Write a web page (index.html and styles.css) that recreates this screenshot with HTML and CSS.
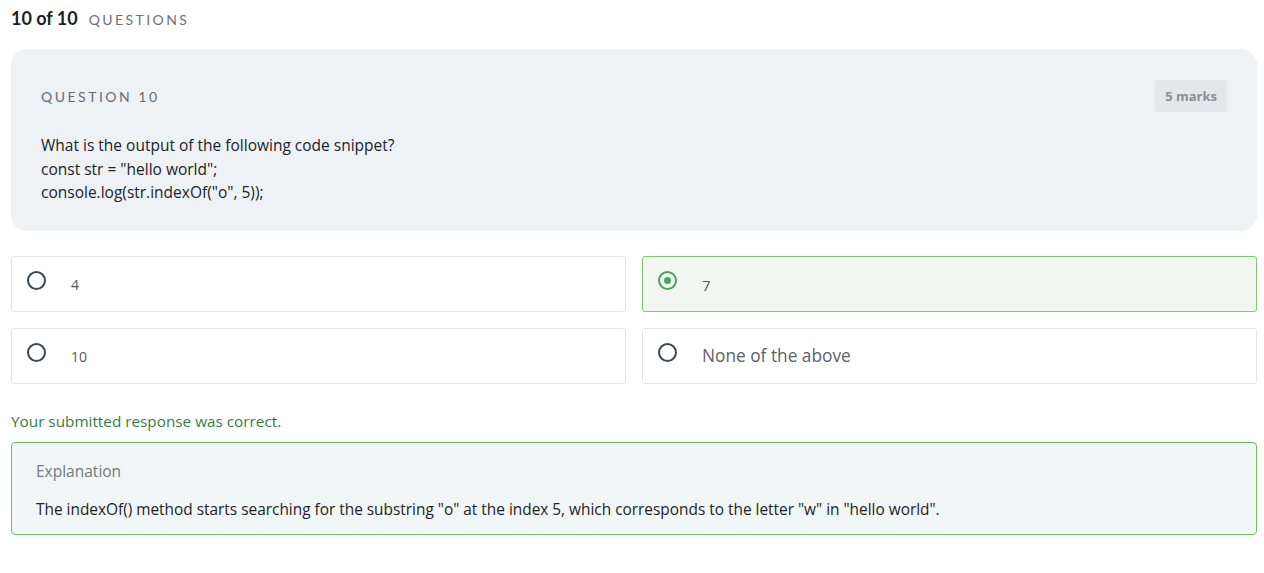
FILE: index.html
```html
<!DOCTYPE html>
<html>
<head>
<meta charset="utf-8">
<link rel="stylesheet" href="styles.css">
</head>
<body>
<div class="page">
  <div class="counter"><span class="count">10 of 10</span><span class="label">QUESTIONS</span></div>
  <div class="qcard">
    <div class="qhead">
      <span class="qnum">QUESTION 10</span>
      <span class="marks">5 marks</span>
    </div>
    <div class="qtext">What is the output of the following code snippet?<br>const str = "hello world";<br>console.log(str.indexOf("o", 5));</div>
  </div>
  <div class="options">
    <div class="opt"><span class="radio"></span><span class="otext small">4</span></div>
    <div class="opt selected"><span class="radio"></span><span class="otext">7</span></div>
    <div class="opt"><span class="radio"></span><span class="otext small">10</span></div>
    <div class="opt"><span class="radio"></span><span class="otext large">None of the above</span></div>
  </div>
  <div class="result">Your submitted response was correct.</div>
  <div class="explain">
    <div class="etitle">Explanation</div>
    <div class="etext">The indexOf() method starts searching for the substring "o" at the index 5, which corresponds to the letter "w" in "hello world".</div>
  </div>
</div>
</body>
</html>
```

FILE: styles.css
```css
* { box-sizing: border-box; }
body {
  margin: 0;
  background: #fff;
  font-family: "Open Sans", Lato, sans-serif;
  color: #1f2328;
}
.page {
  padding: 7px 7px 0 11px;
}
.counter {
  display: flex;
  align-items: baseline;
  gap: 11px;
  height: 25px;
}
.count {
  font-family: Lato, sans-serif;
  font-weight: 700;
  font-size: 18px;
  color: #1c1f24;
}
.label {
  font-family: Lato, sans-serif;
  font-size: 14px;
  letter-spacing: 2.4px;
  color: #6b7178;
}
.qcard {
  margin-top: 17px;
  background: #eef2f5;
  border-radius: 16px;
  padding: 31px 30px 26px 30px;
}
.qhead {
  display: flex;
  justify-content: space-between;
  align-items: center;
}
.qnum {
  font-family: Lato, sans-serif;
  font-size: 14px;
  letter-spacing: 2.5px;
  color: #676d72;
}
.marks {
  background: #e4e7e9;
  color: #8a8f93;
  font-size: 13px;
  font-weight: 700;
  border-radius: 3px;
  padding: 7px 10px;
}
.qtext {
  margin-top: 22px;
  font-size: 15.5px;
  line-height: 23.5px;
  color: #20242a;
}
.options {
  margin-top: 25px;
  display: grid;
  grid-template-columns: 1fr 1fr;
  gap: 16px;
}
.opt {
  height: 56px;
  border: 1px solid #e3e5e7;
  border-radius: 3px;
  display: flex;
  align-items: center;
  padding-left: 15px;
  background: #fff;
}
.radio {
  width: 19px;
  height: 19px;
  border: 2px solid #374955;
  border-radius: 50%;
  flex: none;
  display: flex;
  align-items: center;
  justify-content: center;
  margin-top: -6px;
}
.otext {
  margin-left: 25px;
  font-size: 15px;
  color: #535a61;
  margin-top: 2px;
}
.otext.small { font-size: 14px; }
.otext.large { font-size: 17.3px; color: #5b6268; margin-top: -1px; }
.opt.selected {
  background: #f2f8f1;
  border-color: #7dcb6e;
}
.opt.selected .radio {
  border-color: #4aa35c;
}
.opt.selected .radio::after {
  content: "";
  width: 7px;
  height: 7px;
  border-radius: 50%;
  background: #4aa35c;
}
.result {
  margin-top: 27px;
  font-size: 15.3px;
  color: #2f7f3f;
}
.explain {
  margin-top: 11px;
  border: 1px solid #6cc35d;
  background: #f1f6f6;
  border-radius: 4px;
  padding: 17px 24px 14px 24px;
}
.etitle {
  font-size: 15.5px;
  color: #73797e;
}
.etext {
  margin-top: 17px;
  font-size: 15.4px;
  color: #1f2328;
}
```
